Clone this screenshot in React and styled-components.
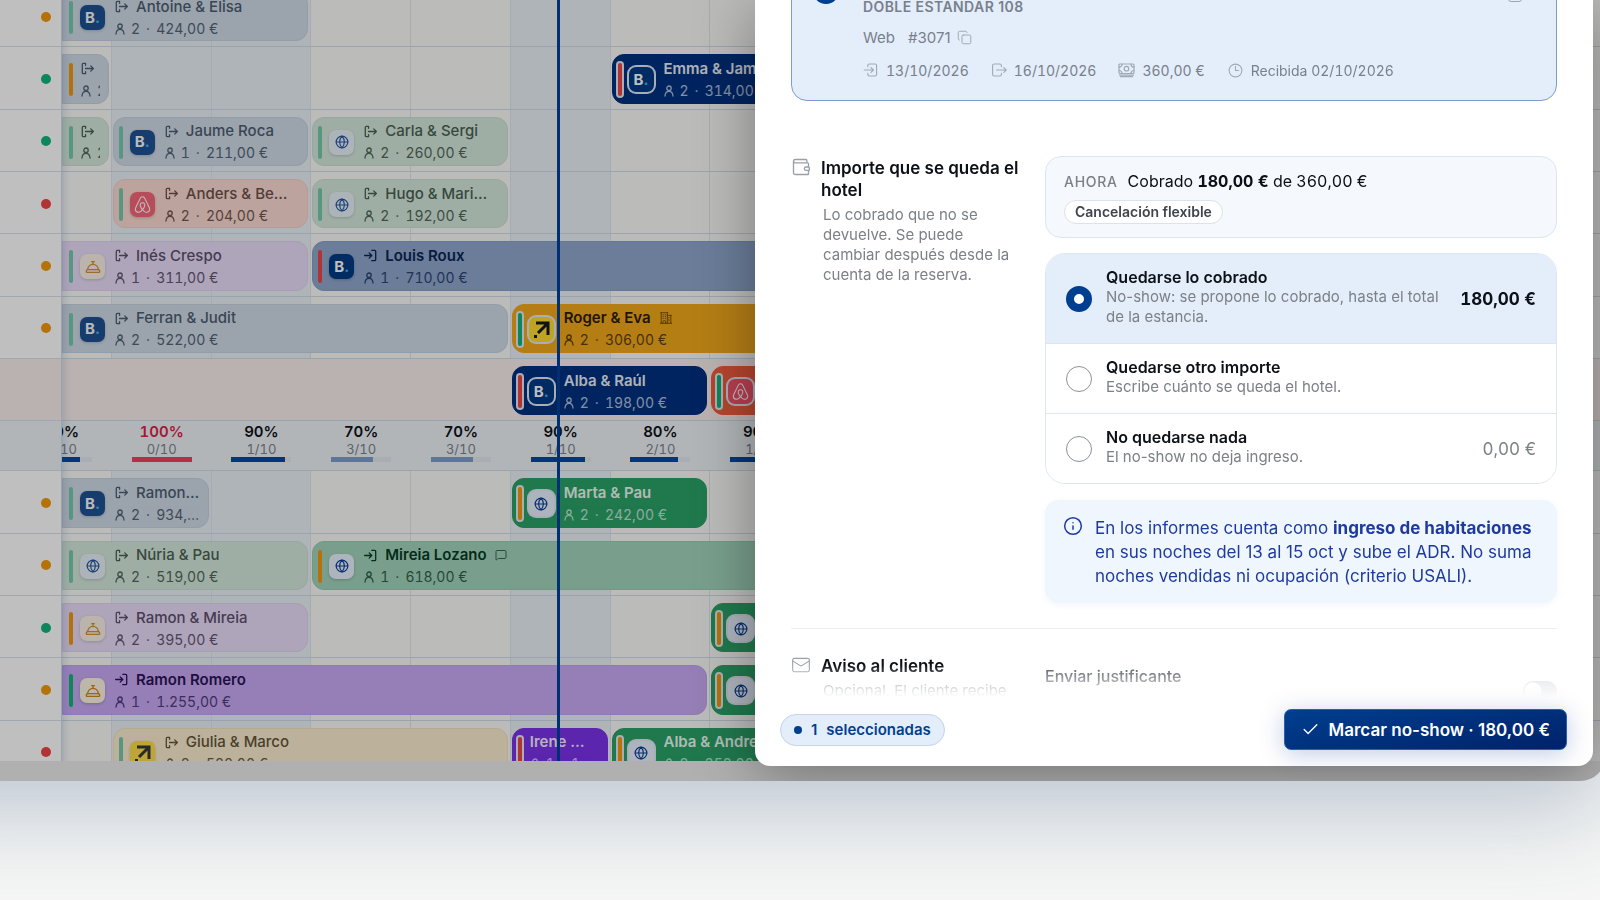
import { createGlobalStyle, styled } from "styled-components";
import { Check, ConciergeBell, Copy, Globe, Info, Mail, MessageSquare, Wallet } from "lucide-react";
import { FaAirbnb } from "react-icons/fa";
import { HiOutlineBuildingOffice2, HiOutlineClock } from "react-icons/hi2";

const GlobalStyle = createGlobalStyle`
  * {
    box-sizing: border-box;
  }

  body {
    margin: 0;
    min-height: 100vh;
    overflow: hidden;
    background: #f5f6f5;
    color: #0c1117;
    font-family: Inter, "Liberation Sans", sans-serif;
    font-size: 15px;
  }
`;

const StFrame = styled.main`
  position: relative;
  margin: 0 -6px 0 -120px;
  padding: 0 0 20px 120px;

  border-radius: 0 0 26px 26px;

  background: #ebebeb;
  box-shadow: 0 30px 90px rgba(70, 95, 135, 0.32);
`;

const StBoard = styled.section`
  display: grid;
  grid-template-columns: 62px minmax(0, 1fr);
  height: 761px;

  overflow: hidden;

  background: #fafaf9;
`;

const boardRows = `
  display: grid;
  grid-template-rows: repeat(7, minmax(0, 1fr)) 50px repeat(5, minmax(0, 1fr));
  height: 798px;
  margin-top: -15px;
`;

const StSidebar = styled.div`
  ${boardRows}
  z-index: 2;

  background: white;
  border-right: 1px solid #cfdbe6;
  box-shadow: 2px 0 8px rgba(60, 100, 150, 0.2);
`;

const StSideCell = styled.div`
  display: flex;
  align-items: center;
  justify-content: flex-end;
  padding: 2px 10px 0 0;

  border-bottom: 1px solid #d5e1ec;
  background: ${(props) => props.$background};
`;

const StDot = styled.span`
  width: 10px;
  height: 10px;

  border-radius: 50%;

  background: ${(props) => props.$color};
`;

const StTimeline = styled.div`
  ${boardRows}
  grid-template-columns: repeat(16, minmax(0, 1fr));
  margin-left: -50px;
  margin-right: -2px;
`;

const StDay = styled.div`
  grid-row: 1 / -1;
  grid-column: ${(props) => props.$column};

  border-right: 1px solid #dce5ec;
  background: ${(props) => (props.$shaded ? "#e8f0f6" : "transparent")};
`;

const StLine = styled.div`
  grid-row: ${(props) => props.$row};
  grid-column: 1 / -1;

  border-bottom: 1px solid #cedbe6;
  background: ${(props) => props.$background};
`;

const StNow = styled.div`
  grid-row: 1 / -1;
  grid-column: 6;
  z-index: 1;

  width: 3px;
  margin-left: 46px;

  background: #00409a;
`;

const tones = {
  blueDone: { background: "#cfdae6", color: "#4c5d72", edge: "#c6d2df" },
  greenDone: { background: "#d5e8dc", color: "#4a6152", edge: "#cbdfd3" },
  pinkDone: { background: "#fbdad2", color: "#6b5048", edge: "#f3cfc6" },
  violetDone: { background: "#eadcf8", color: "#5c4f6e", edge: "#e1d2f1" },
  sandDone: { background: "#fbecce", color: "#65563a", edge: "#f2e2c0" },
  blueIn: { background: "#8fa7cc", color: "#082453", edge: "#869fc5" },
  greenIn: { background: "#a2d4bb", color: "#063a25", edge: "#96ccb1" },
  violetIn: { background: "#c7aaf3", color: "#2b1257", edge: "#c0a2f1" },
  blue: { background: "#003080", color: "#e8eefa", edge: "#003080" },
  green: { background: "#2ba067", color: "#e9fbf1", edge: "#2ba067" },
  violet: { background: "#7a32e8", color: "#f3ebff", edge: "#7a32e8" },
  amber: { background: "#f2a81c", color: "#2b1d02", edge: "#f2a81c" },
  red: { background: "#f35c3e", color: "#ffffff", edge: "#f35c3e" },
};

const StBooking = styled.article`
  grid-row: ${(props) => props.$row};
  grid-column: ${(props) => props.$from} / ${(props) => props.$to};

  display: flex;
  align-items: center;
  min-width: 0;
  margin: 7px 3px 6px ${(props) => (props.$cut ? "50px" : "1px")};
  padding: 2px 8px 0 ${(props) => (props.$cut ? "6px" : "5px")};

  overflow: hidden;

  border: 1px solid ${(props) => tones[props.$tone].edge};
  border-radius: ${(props) => (props.$cut ? "0 12px 12px 0" : "12px")};

  background: ${(props) => tones[props.$tone].background};
  color: ${(props) => tones[props.$tone].color};
`;

const StStripe = styled.span`
  flex: none;
  width: 4px;
  height: 33px;

  border-radius: 3px;

  background: ${(props) => props.$color};
  box-shadow: ${(props) => (props.$ring ? "0 0 0 2px #e4e9f2" : "none")};
`;

const tileColors = {
  booking: "#003a85",
  airbnb: "#f4536b",
  expedia: "#fddb32",
  web: "#e9f1fc",
  desk: "#fdf4e3",
};

const StTile = styled.span`
  display: flex;
  flex: none;
  align-items: center;
  justify-content: center;
  width: 25px;
  height: 25px;
  margin-left: 7px;

  border-radius: 7px;

  background: ${(props) => tileColors[props.$channel]};
  box-shadow: ${(props) =>
    props.$ring ? "0 0 0 2px #dfe8f5" : "0 1px 3px rgba(0, 0, 0, 0.2)"};
  opacity: ${(props) => (props.$faded ? 0.85 : 1)};
`;

const StLetter = styled.span`
  color: white;
  font-size: 15px;
  font-weight: 700;
  line-height: 24px;

  i {
    color: #22b4f5;
    font-style: normal;
  }
`;

const StBookingText = styled.div`
  min-width: 0;
  margin-left: ${(props) => (props.$tile ? "10px" : "8px")};

  overflow: hidden;
`;

const StGuest = styled.div`
  display: flex;
  align-items: center;
  gap: 8px;
  height: 22px;

  font-weight: ${(props) => (props.$strong ? 600 : 500)};
  line-height: 22px;
  white-space: nowrap;

  svg {
    flex: none;
  }
`;

const StExtra = styled.span`
  display: flex;

  opacity: 0.7;
`;

const StStay = styled.div`
  display: flex;
  align-items: center;
  gap: 6px;

  font-size: 14px;
  font-variant-numeric: tabular-nums;
  line-height: 22px;
  white-space: nowrap;
  opacity: ${(props) => (props.$soft ? 0.75 : 0.95)};

  svg {
    flex: none;
  }
`;

const StOccupancy = styled.div`
  grid-row: 8;
  grid-column: ${(props) => props.$column};

  display: flex;
  flex-direction: column;
  align-items: center;
  padding-top: 2px;

  font-variant-numeric: tabular-nums;
`;

const StPercent = styled.strong`
  color: ${(props) => (props.$full ? "#e11d48" : "inherit")};
  font-weight: 600;
  line-height: 18px;
`;

const StRooms = styled.span`
  color: #7b838c;
  font-size: 13px;
  line-height: 16px;
`;

const StTrack = styled.span`
  width: 60px;
  height: 5px;

  background: #e3e9ee;
`;

const StFill = styled.span`
  display: block;
  height: 5px;

  background: ${(props) => props.$color};
`;

const StScrim = styled.div`
  position: absolute;
  inset: 0;
  z-index: 3;

  display: flex;
  justify-content: flex-end;
  padding: 0 13px 15px 0;

  overflow: hidden;

  border-radius: 0 0 26px 26px;

  background: rgba(0, 0, 0, 0.25);
`;

const StDrawer = styled.aside`
  display: flex;
  flex-direction: column;
  width: 60%;
  max-width: 838px;

  border-radius: 0 0 15px 15px;

  background: white;
  box-shadow: 0 10px 60px rgba(0, 0, 0, 0.35);
`;

const StDrawerBody = styled.div`
  flex: 1;
  min-height: 0;
  padding: 0 36px;

  overflow: hidden;

  mask-image: linear-gradient(to top, transparent 0, black 32px);
`;

const StReservation = styled.section`
  display: grid;
  grid-template-columns: 26px 1fr auto;
  gap: 24px;
  height: 126px;
  margin-top: -25px;
  padding: 2px 34px 0 21px;

  border: 1px solid #7c9ccb;
  border-radius: 16px;

  background: #e4edfa;
`;

const StRadio = styled.input`
  flex: none;
  width: 26px;
  height: 26px;
  margin: 0;

  appearance: none;

  border: 1px solid #8d9299;
  border-radius: 50%;

  background: white;

  &:checked {
    border: 8px solid #003f8f;
  }
`;

const StReservationInfo = styled.div`
  display: flex;
  flex-direction: column;

  color: #78808c;
`;

const StRoom = styled.h2`
  margin: 20px 0 9px;

  font-size: 14px;
  font-weight: 600;
  line-height: 18px;
  letter-spacing: 0.03em;
`;

const StOrigin = styled.div`
  display: flex;
  align-items: center;
  gap: 13px;
  height: 24px;
  margin-bottom: 9px;
`;

const StFacts = styled.div`
  display: flex;
  align-items: center;
  gap: 22px;
  height: 24px;

  font-size: 14px;
  font-variant-numeric: tabular-nums;
`;

const StFact = styled.span`
  display: flex;
  align-items: center;
  gap: 7px;

  svg {
    color: #a0a9b6;
  }
`;

const StNoteMark = styled.span`
  width: 14px;
  height: 14px;
  margin-top: 10px;

  border: 1px solid #9aa4b2;
  border-radius: 3px;
`;

const StSection = styled.section`
  display: grid;
  grid-template-columns: 230px 1fr;
  gap: 24px;
  padding: ${(props) => props.$padding};

  border-bottom: 1px solid #eceef0;
`;

const StSectionHead = styled.div`
  display: grid;
  grid-template-columns: 20px 1fr;
  column-gap: 10px;
  align-content: start;
  padding-top: 1px;

  svg {
    color: #9ba0a6;
  }
`;

const StSectionTitle = styled.h3`
  margin: 0;

  font-size: 17px;
  font-weight: 600;
  line-height: 22px;
`;

const StSectionNote = styled.p`
  grid-column: 2;
  max-width: 192px;
  margin: 4px 0 0 2px;

  color: #7c8187;
  line-height: 20px;
`;

const StNowBox = styled.div`
  display: flex;
  flex-direction: column;
  align-items: flex-start;
  gap: 7px;
  padding: 13px 18px;

  border: 1px solid #dce6f1;
  border-radius: 16px;

  background: #f5f8fd;
`;

const StCharged = styled.div`
  font-size: 16px;
  font-variant-numeric: tabular-nums;
  line-height: 23px;

  small {
    margin-right: 10px;
    color: #7c8187;
    font-size: 14px;
    font-weight: 500;
    letter-spacing: 0.05em;
  }

  b {
    font-weight: 700;
  }
`;

const StChip = styled.span`
  padding: 0 10px;

  border: 1px solid #dbe2ea;
  border-radius: 12px;

  background: white;
  color: #3f454c;
  font-size: 14px;
  font-weight: 600;
  line-height: 22px;
`;

const StChoices = styled.div`
  margin: 15px 0 16px;

  overflow: hidden;

  border: 1px solid #dce6f1;
  border-radius: 20px;
`;

const StChoice = styled.label`
  display: flex;
  align-items: center;
  gap: 14px;
  padding: 13px 20px;

  background: ${(props) => (props.$active ? "#e4edfa" : "white")};

  & + & {
    border-top: 1px solid #dce6f1;
  }
`;

const StChoiceText = styled.span`
  flex: 1;
  padding-bottom: 3px;

  color: #7c8187;
  line-height: 20px;

  b {
    display: block;
    color: #0c1117;
    font-size: 16px;
    font-weight: 600;
  }
`;

const StAmount = styled.span`
  color: ${(props) => (props.$active ? "#0c1117" : "#7c8187")};
  font-size: 17px;
  font-variant-numeric: tabular-nums;
  font-weight: ${(props) => (props.$active ? 700 : 400)};
`;

const StInfo = styled.p`
  display: flex;
  gap: 12px;
  margin: 0;
  padding: 16px 18px 15px;

  border-radius: 14px;

  background: #eff6fe;
  box-shadow: 0 2px 6px rgba(60, 110, 200, 0.06);
  color: #1e3a9f;
  font-size: 17px;
  line-height: 24px;

  svg {
    flex: none;
  }
`;

const StNotify = styled.label`
  display: flex;
  align-items: flex-start;
  justify-content: space-between;
  padding-top: 10px;

  color: #4f555b;
  font-size: 16px;
  font-weight: 500;
  line-height: 24px;
`;

const StSwitch = styled.input`
  width: 34px;
  height: 20px;
  margin: 17px 0 0;

  appearance: none;

  border-radius: 10px;

  background: radial-gradient(circle at 10px 10px, white 8px, #d5d9dd 9px);
`;

const StFooter = styled.footer`
  display: flex;
  align-items: center;
  justify-content: space-between;
  padding: 12px 26px 16px 25px;
`;

const StSelected = styled.span`
  display: flex;
  align-items: center;
  gap: 9px;
  height: 32px;
  padding: 0 13px;

  border: 1px solid #c5d5ea;
  border-radius: 16px;

  background: #e4edfa;
  color: #003f8f;
  font-weight: 600;
`;

const StSelectedDot = styled.i`
  width: 8px;
  height: 8px;

  border-radius: 50%;

  background: #003f8f;
`;

const StSubmitBtn = styled.button`
  display: flex;
  align-items: center;
  gap: 9px;
  height: 41px;
  padding: 0 16px;

  border: 1px solid #2d5fae;
  border-radius: 7px;

  background: linear-gradient(170deg, #003f8f, #00226a);
  box-shadow: 0 4px 24px rgba(0, 50, 150, 0.25);
  color: white;
  font-family: inherit;
  font-size: 17px;
  font-weight: 600;
`;

const lineIcon = {
  fill: "none",
  stroke: "currentColor",
  strokeLinecap: "round",
  strokeLinejoin: "round",
};

function ExitIcon() {
  return (
    <svg width="13" height="13" viewBox="0 0 20 20" strokeWidth="2" {...lineIcon}>
      <path d="M7 5V2H3.500A1.500 1.500 0 0 0 2 3.500v13A1.500 1.500 0 0 0 3.500 18H7V15M7 10h12M15 6l4 4-4 4" />
    </svg>
  );
}

function EnterIcon() {
  return (
    <svg width="13" height="13" viewBox="0 0 20 20" strokeWidth="2" {...lineIcon}>
      <path d="M12 2h4.500A1.500 1.500 0 0 1 18 3.500v13a1.500 1.500 0 0 1-1.500 1.500H12M1 10h11M8 6l4 4-4 4" />
    </svg>
  );
}

function CheckInIcon() {
  return (
    <svg width="16" height="16" viewBox="0 0 20 20" strokeWidth="1.4" {...lineIcon}>
      <path d="M6 6V4.500A2 2 0 0 1 8 2.500h7a2 2 0 0 1 2 2v11a2 2 0 0 1-2 2H8a2 2 0 0 1-2-2V14M1.500 10H13M10 7l3 3-3 3" />
    </svg>
  );
}

function CheckOutIcon() {
  return (
    <svg width="16" height="16" viewBox="0 0 20 20" strokeWidth="1.4" {...lineIcon}>
      <path d="M13 6V4.500a2 2 0 0 0-2-2H4a2 2 0 0 0-2 2v11a2 2 0 0 0 2 2h7a2 2 0 0 0 2-2V14M7 10h12M16 7l3 3-3 3" />
    </svg>
  );
}

function BanknoteIcon() {
  return (
    <svg width="17" height="15" viewBox="0 0 17 15" strokeWidth="1.2" {...lineIcon}>
      <rect x="1" y="1" width="15" height="9.500" rx="1" />
      <circle cx="8.500" cy="5.700" r="2.300" />
      <path d="M1 4.200c1.800 0 3-1.200 3-3M16 4.200c-1.800 0-3-1.200-3-3M1 7.500c1.800 0 3 1.200 3 3M16 7.500c-1.800 0-3 1.200-3 3" />
      <path d="M1.500 12.200h14M2.500 13.700h12" />
    </svg>
  );
}

function PersonIcon() {
  return (
    <svg width="10" height="12" viewBox="0 0 10 12" strokeWidth="1.3" {...lineIcon}>
      <circle cx="5" cy="3.200" r="2.200" />
      <path d="M1 11c.2-3 1.600-4.600 4-4.600S8.800 8 9 11" />
    </svg>
  );
}

function ExpediaMark() {
  return (
    <svg width="19" height="19" viewBox="0 0 19 19" fill="none" stroke="#15181f" strokeWidth="3">
      <path d="M4 3h12v12M15 4L6 13" />
      <path d="M2 16.500h3" />
    </svg>
  );
}

function Channel({ channel, ring, faded }) {
  return (
    <StTile $channel={channel} $ring={ring} $faded={faded}>
      {channel === "booking" && (
        <StLetter>
          B<i>.</i>
        </StLetter>
      )}
      {channel === "airbnb" && <FaAirbnb size={19} color="white" />}
      {channel === "expedia" && <ExpediaMark />}
      {channel === "web" && <Globe size={14} color="#0a3f94" />}
      {channel === "desk" && <ConciergeBell size={16} color="#d08418" />}
    </StTile>
  );
}

const GREEN = "#0fb57a";
const SOFT_GREEN = "#76c9ab";
const AMBER = "#f0980c";
const RED = "#ee4444";

const bookings = [
  { row: 1, from: 1, to: 4, cut: true, tone: "blueDone", stripe: SOFT_GREEN, channel: "booking", move: "out", guest: "Antoine & Elisa", people: 2, price: "424,00 €" },
  { row: 2, from: 1, to: 2, cut: true, tone: "blueDone", stripe: AMBER, move: "out", people: 2 },
  { row: 2, from: 7, to: 10, tone: "blue", stripe: RED, channel: "booking", guest: "Emma & James", people: 2, price: "314,00 €" },
  { row: 3, from: 1, to: 2, cut: true, tone: "greenDone", stripe: SOFT_GREEN, move: "out", people: 2 },
  { row: 3, from: 2, to: 4, tone: "blueDone", stripe: SOFT_GREEN, channel: "booking", move: "out", guest: "Jaume Roca", people: 1, price: "211,00 €" },
  { row: 3, from: 4, to: 6, tone: "greenDone", stripe: SOFT_GREEN, channel: "web", move: "out", guest: "Carla & Sergi", people: 2, price: "260,00 €" },
  { row: 4, from: 2, to: 4, tone: "pinkDone", stripe: SOFT_GREEN, channel: "airbnb", move: "out", guest: "Anders & Be…", people: 2, price: "204,00 €" },
  { row: 4, from: 4, to: 6, tone: "greenDone", stripe: SOFT_GREEN, channel: "web", move: "out", guest: "Hugo & Mari…", people: 2, price: "192,00 €" },
  { row: 5, from: 1, to: 4, cut: true, tone: "violetDone", stripe: SOFT_GREEN, channel: "desk", move: "out", guest: "Inés Crespo", people: 1, price: "311,00 €" },
  { row: 5, from: 4, to: 10, tone: "blueIn", stripe: RED, channel: "booking", move: "in", guest: "Louis Roux", people: 1, price: "710,00 €" },
  { row: 6, from: 1, to: 6, cut: true, tone: "blueDone", stripe: SOFT_GREEN, channel: "booking", move: "out", guest: "Ferran & Judit", people: 2, price: "522,00 €" },
  { row: 6, from: 6, to: 10, tone: "amber", stripe: GREEN, channel: "expedia", guest: "Roger & Eva", extra: "company", people: 2, price: "306,00 €" },
  { row: 7, from: 6, to: 8, tone: "blue", stripe: RED, channel: "booking", guest: "Alba & Raúl", people: 2, price: "198,00 €" },
  { row: 7, from: 8, to: 10, tone: "red", stripe: GREEN, channel: "airbnb", people: 2 },
  { row: 9, from: 1, to: 3, cut: true, tone: "blueDone", stripe: SOFT_GREEN, channel: "booking", move: "out", guest: "Ramon…", people: 2, price: "934,…" },
  { row: 9, from: 6, to: 8, tone: "green", stripe: AMBER, channel: "web", guest: "Marta & Pau", people: 2, price: "242,00 €" },
  { row: 10, from: 1, to: 4, cut: true, tone: "greenDone", stripe: SOFT_GREEN, channel: "web", move: "out", guest: "Núria & Pau", people: 2, price: "519,00 €" },
  { row: 10, from: 4, to: 10, tone: "greenIn", stripe: AMBER, channel: "web", move: "in", guest: "Mireia Lozano", extra: "note", people: 1, price: "618,00 €" },
  { row: 11, from: 1, to: 4, cut: true, tone: "violetDone", stripe: AMBER, channel: "desk", move: "out", guest: "Ramon & Mireia", people: 2, price: "395,00 €" },
  { row: 11, from: 8, to: 10, tone: "green", stripe: AMBER, channel: "web", people: 2 },
  { row: 12, from: 1, to: 8, cut: true, tone: "violetIn", stripe: GREEN, channel: "desk", move: "in", guest: "Ramon Romero", people: 1, price: "1.255,00 €" },
  { row: 12, from: 8, to: 10, tone: "green", stripe: AMBER, channel: "web", people: 2 },
  { row: 13, from: 2, to: 6, tone: "sandDone", stripe: SOFT_GREEN, channel: "expedia", move: "out", guest: "Giulia & Marco", people: 2, price: "528,00 €" },
  { row: 13, from: 6, to: 7, tone: "violet", stripe: RED, guest: "Irene …", people: 1, price: "1…" },
  { row: 13, from: 7, to: 10, tone: "green", stripe: AMBER, channel: "web", guest: "Alba & Andreu", people: 2, price: "358,00 €" },
];

const occupancy = [
  { percent: 80, rooms: "2/10", color: "#0049a5" },
  { percent: 100, rooms: "0/10", color: "#f04062" },
  { percent: 90, rooms: "1/10", color: "#0049a5" },
  { percent: 70, rooms: "3/10", color: "#7c9cc9" },
  { percent: 70, rooms: "3/10", color: "#7c9cc9" },
  { percent: 90, rooms: "1/10", color: "#0049a5" },
  { percent: 80, rooms: "2/10", color: "#0049a5" },
  { percent: 90, rooms: "1/10", color: "#0049a5" },
];

const roomStates = [AMBER, GREEN, GREEN, RED, AMBER, AMBER, null, null, AMBER, AMBER, GREEN, AMBER, RED];

const shadedDays = [2, 3, 6];

const lineColor = (row) => {
  if (row === 7) return "#f8eeec";
  if (row === 8) return "#edf2f6";
  return "transparent";
};

function Booking({ booking }) {
  const { row, from, to, cut, tone, stripe, channel, move, guest, extra, people, price } = booking;
  const isDone = move === "out";
  return (
    <StBooking $row={row} $from={from} $to={to} $cut={cut} $tone={tone}>
      <StStripe $color={stripe} $ring={!move} />
      {channel && <Channel channel={channel} ring={!move} faded={isDone} />}
      <StBookingText $tile={channel}>
        <StGuest $strong={!isDone}>
          {move === "out" && <ExitIcon />}
          {move === "in" && <EnterIcon />}
          {guest && <span>{guest}</span>}
          {extra && (
            <StExtra>
              {extra === "company" ? <HiOutlineBuildingOffice2 size={14} /> : <MessageSquare size={12} />}
            </StExtra>
          )}
        </StGuest>
        <StStay $soft={!isDone}>
          <PersonIcon />
          <span>{people}</span>
          {price && <span>·</span>}
          {price && <span>{price}</span>}
        </StStay>
      </StBookingText>
    </StBooking>
  );
}

function Board() {
  return (
    <StBoard>
      <StSidebar>
        {roomStates.map((color, index) => (
          <StSideCell key={index} $background={lineColor(index + 1)}>
            {color && <StDot $color={color} />}
          </StSideCell>
        ))}
      </StSidebar>
      <StTimeline>
        {Array.from({ length: 16 }, (_, index) => (
          <StDay key={index} $column={index + 1} $shaded={shadedDays.includes(index + 1)} />
        ))}
        {roomStates.map((_, index) => (
          <StLine key={index} $row={index + 1} $background={lineColor(index + 1)} />
        ))}
        {occupancy.map(({ percent, rooms, color }, index) => (
          <StOccupancy key={index} $column={index + 1}>
            <StPercent $full={percent === 100}>{percent}%</StPercent>
            <StRooms>{rooms}</StRooms>
            <StTrack>
              <StFill $color={color} style={{ width: `${percent}%` }} />
            </StTrack>
          </StOccupancy>
        ))}
        {bookings.map((booking) => (
          <Booking key={`${booking.row}-${booking.from}`} booking={booking} />
        ))}
        <StNow />
      </StTimeline>
    </StBoard>
  );
}

function App() {
  return (
    <>
      <GlobalStyle />
      <StFrame>
        <Board />
        <StScrim>
          <StDrawer>
            <StDrawerBody>
              <StReservation>
                <StRadio type="radio" name="reservation" aria-label="#3071" defaultChecked />
                <StReservationInfo>
                  <StRoom>DOBLE ESTÁNDAR 108</StRoom>
                  <StOrigin>
                    <span>Web</span>
                    <StFact>
                      #3071 <Copy size={15} strokeWidth={1.6} />
                    </StFact>
                  </StOrigin>
                  <StFacts>
                    <StFact>
                      <CheckInIcon /> 13/10/2026
                    </StFact>
                    <StFact>
                      <CheckOutIcon /> 16/10/2026
                    </StFact>
                    <StFact>
                      <BanknoteIcon /> 360,00 €
                    </StFact>
                    <StFact>
                      <HiOutlineClock size={17} /> Recibida 02/10/2026
                    </StFact>
                  </StFacts>
                </StReservationInfo>
                <StNoteMark />
              </StReservation>

              <StSection $padding="55px 0 25px">
                <StSectionHead>
                  <Wallet size={20} strokeWidth={1.6} />
                  <StSectionTitle>Importe que se queda el hotel</StSectionTitle>
                  <StSectionNote>
                    Lo cobrado que no se devuelve. Se puede cambiar después desde la cuenta de la
                    reserva.
                  </StSectionNote>
                </StSectionHead>
                <div>
                  <StNowBox>
                    <StCharged>
                      <small>AHORA</small>Cobrado <b>180,00 €</b> de 360,00 €
                    </StCharged>
                    <StChip>Cancelación flexible</StChip>
                  </StNowBox>
                  <StChoices>
                    <StChoice $active>
                      <StRadio type="radio" name="amount" defaultChecked />
                      <StChoiceText>
                        <b>Quedarse lo cobrado</b>
                        No-show: se propone lo cobrado, hasta el total de la estancia.
                      </StChoiceText>
                      <StAmount $active>180,00 €</StAmount>
                    </StChoice>
                    <StChoice>
                      <StRadio type="radio" name="amount" />
                      <StChoiceText>
                        <b>Quedarse otro importe</b>
                        Escribe cuánto se queda el hotel.
                      </StChoiceText>
                    </StChoice>
                    <StChoice>
                      <StRadio type="radio" name="amount" />
                      <StChoiceText>
                        <b>No quedarse nada</b>
                        El no-show no deja ingreso.
                      </StChoiceText>
                      <StAmount>0,00 €</StAmount>
                    </StChoice>
                  </StChoices>
                  <StInfo>
                    <Info size={20} strokeWidth={1.8} />
                    <span>
                      En los informes cuenta como <b>ingreso de habitaciones</b> en sus noches del
                      13 al 15 oct y sube el ADR. No suma noches vendidas ni ocupación (criterio
                      USALI).
                    </span>
                  </StInfo>
                </div>
              </StSection>

              <StSection $padding="25px 0">
                <StSectionHead>
                  <Mail size={20} strokeWidth={1.3} />
                  <StSectionTitle>Aviso al cliente</StSectionTitle>
                  <StSectionNote>Opcional. El cliente recibe el justificante.</StSectionNote>
                </StSectionHead>
                <StNotify>
                  Enviar justificante
                  <StSwitch type="checkbox" role="switch" />
                </StNotify>
              </StSection>
            </StDrawerBody>
            <StFooter>
              <StSelected>
                <StSelectedDot />
                <span>1</span>
                <span>seleccionadas</span>
              </StSelected>
              <StSubmitBtn type="button">
                <Check size={19} strokeWidth={1.7} />
                Marcar no-show · 180,00 €
              </StSubmitBtn>
            </StFooter>
          </StDrawer>
        </StScrim>
      </StFrame>
    </>
  );
}

export default App;
